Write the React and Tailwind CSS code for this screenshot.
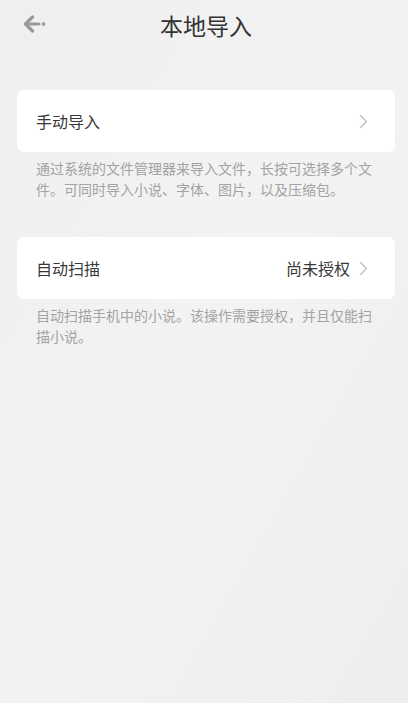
import React from "react";

function Chevron() {
  return (
    <svg width="9" height="15" viewBox="0 0 9 15" fill="none" className="ml-[9px]">
      <path d="M1.5 1.5 L7.5 7.5 L1.5 13.5" stroke="#c4c4c4" strokeWidth="1.6" strokeLinecap="round" strokeLinejoin="round" />
    </svg>
  );
}

function BackArrow() {
  return (
    <svg width="25" height="18" viewBox="0 0 25 18" fill="none">
      <path d="M9.5 2 L2.5 9 L9.5 16" stroke="#9a9a9a" strokeWidth="3.2" strokeLinecap="round" strokeLinejoin="round" />
      <path d="M3.5 9 L16 9" stroke="#9a9a9a" strokeWidth="3.2" strokeLinecap="round" />
      <rect x="19" y="7.4" width="3.2" height="3.2" fill="#9a9a9a" />
    </svg>
  );
}

export default function App() {
  return (
    <div
      className="w-[408px] h-[703px] overflow-hidden bg-gradient-to-br from-[#efefef] via-[#f3f3f3] to-[#eeeeee]"
      style={{ fontFamily: '"Noto Sans CJK SC", "Noto Sans", sans-serif' }}
    >
      <div className="relative h-[50px] flex items-center justify-center">
        <div className="absolute left-[23px] top-[15px]">
          <BackArrow />
        </div>
        <span className="ml-[4px] text-[23px] text-[#333333] leading-none">本地导入</span>
      </div>

      <div className="pl-[17px] pr-[13px] pt-[40px]">
        <div className="bg-white rounded-[7px] h-[62px] flex items-center pl-[19px] pr-[27px]">
          <span className="text-[16px] text-[#383838]">手动导入</span>
          <div className="flex-1" />
          <Chevron />
        </div>
        <p className="pl-[19px] pr-[20px] pt-[6px] text-[14px] leading-[21px] text-[#a3a3a3]">
          通过系统的文件管理器来导入文件，长按可选择多个文件。可同时导入小说、字体、图片，以及压缩包。
        </p>

        <div className="mt-[37px] bg-white rounded-[7px] h-[62px] flex items-center pl-[19px] pr-[27px]">
          <span className="text-[16px] text-[#383838]">自动扫描</span>
          <div className="flex-1" />
          <span className="text-[16px] text-[#383838]">尚未授权</span>
          <Chevron />
        </div>
        <p className="pl-[19px] pr-[20px] pt-[6px] text-[14px] leading-[21px] text-[#a3a3a3]">
          自动扫描手机中的小说。该操作需要授权，并且仅能扫描小说。
        </p>
      </div>
    </div>
  );
}
